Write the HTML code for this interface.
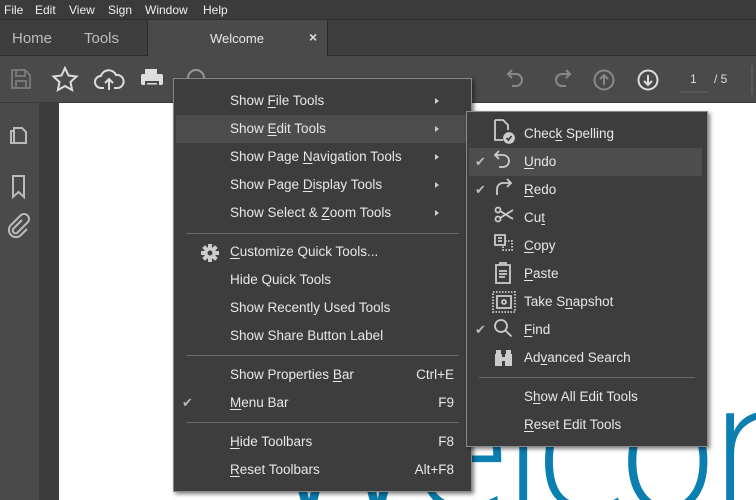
<!DOCTYPE html>
<html><head><meta charset="utf-8"><style>
*{margin:0;padding:0;box-sizing:border-box}
html,body{width:756px;height:500px;overflow:hidden}
body{background:#4a4a4a;font-family:"Liberation Sans",sans-serif;font-size:13px;color:#e8e8e8;position:relative}
.abs{position:absolute}
#mb{left:0;top:0;width:756px;height:20px;background:#3b3b3b;border-bottom:1px solid #2e2e2e}
#mb span{position:absolute;top:3px;font-size:12px;color:#f0f0f0}
#tabs{left:0;top:20px;width:756px;height:36px;background:#3e3e3e;border-bottom:1px solid #2e2e2e}
#tb{left:0;top:56px;width:756px;height:47px;background:#4a4a4a;border-bottom:1px solid #3a3a3a}
#side{left:0;top:103px;width:40px;height:397px;background:#4a4a4a;border-right:1px solid #3a3a3a}
#strip{left:40px;top:103px;width:19px;height:397px;background:#3c3c3c}
#page{left:59px;top:103px;width:697px;height:397px;background:#fff;overflow:hidden}
.menu{background:#3d3d3d;border:1px solid #8a8a8a;box-shadow:2px 2px 4px rgba(0,0,0,.5)}
.it{position:absolute;left:0;right:0;height:28px;line-height:28px}
.it .t{position:absolute;left:56px;font-size:13.5px;white-space:nowrap}
.it .k{position:absolute;right:17px;font-size:13.5px}
.it .ar{position:absolute;right:32px;top:11px;width:0;height:0;border-left:4px solid #ccc;border-top:3.5px solid transparent;border-bottom:3.5px solid transparent}
.it .ck{position:absolute;left:8px;top:0;color:#bbb;font-size:13px}
.hl{background:#4d4d4d;left:2px;right:5px}
.sep{position:absolute;left:12px;right:12px;height:1px;background:#6a6a6a}
u{text-decoration:underline;text-underline-offset:2px}
.ic{position:absolute;left:26px;top:5px}
</style></head><body>
<div id="mb" class="abs">
<span style="left:4px">File</span><span style="left:35px">Edit</span><span style="left:69px">View</span><span style="left:108px">Sign</span><span style="left:145px">Window</span><span style="left:203px">Help</span>
</div>
<div id="tabs" class="abs">
<div class="abs" style="left:0;top:0;width:148px;height:36px;border-right:1px solid #2a2a2a"></div>
<span class="abs" style="left:12px;top:10px;font-size:15px;color:#bdbdbd">Home</span>
<span class="abs" style="left:84px;top:10px;font-size:15px;color:#bdbdbd">Tools</span>
<div class="abs" style="left:148px;top:0;width:180px;height:36px;background:#4a4a4a;border-right:1px solid #2a2a2a"></div>
<span class="abs" style="left:210px;top:11px;font-size:13px;color:#e8e8e8">Welcome</span>
<span class="abs" style="left:309px;top:9px;font-size:14px;color:#ddd;font-weight:bold">×</span>
</div>
<div id="tb" class="abs">
<svg class="abs" style="left:0;top:0" width="756" height="47" fill="none" stroke-width="2">
<g stroke="#777"><path d="M12 14h13l5 5v13h-18z"/><path d="M16 14v6h9v-6M16 32v-7h10v7"/></g>
<path stroke="#ddd" d="M65 12l3.5 7.5 8 1-6 5.5 1.6 8-7.1-4-7.1 4 1.6-8-6-5.5 8-1z"/>
<path stroke="#ddd" d="M104 32h-3a6 6 0 0 1 0-12 8 8 0 0 1 15-1 6 6 0 0 1 2 13h-4M109 34v-10M105 27l4-4 4 4"/>
<g fill="#ddd" stroke="none"><rect x="145" y="13" width="12" height="5"/><rect x="141" y="18" width="22" height="11" rx="2"/><rect x="145" y="25" width="14" height="7" fill="#4a4a4a"/><rect x="147" y="27" width="10" height="1.5"/></g>
<circle cx="196" cy="22" r="8" stroke="#999"/>
<g stroke="#888"><path d="M508 18h8a6 6 0 0 1 0 12h-4M512 14l-4 4 4 4"/><path d="M570 18h-8a6 6 0 0 0 0 12h4M566 14l4 4-4 4"/><circle cx="604" cy="24" r="9.5"/><path d="M604 29v-10M600 23l4-4 4 4"/></g>
<g stroke="#ddd"><circle cx="648" cy="24" r="9.5"/><path d="M648 19v10M644 25l4 4 4-4"/></g>
<path stroke="#666" stroke-width="1" d="M680 36h28"/>
<path stroke="#666" stroke-width="1" d="M752 10v28"/>
</svg>
<span class="abs" style="left:690px;top:16px;font-size:12px;color:#ddd">1</span>
<span class="abs" style="left:714px;top:16px;font-size:12px;color:#ddd">/ 5</span>
</div>
<div id="side" class="abs">
<svg width="40" height="150" fill="none" stroke="#bbb" stroke-width="2">
<path d="M14 40h-3v-12h3M14 28v-3h8l4 4v11h-12z"/>
<path d="M13 73h11v21l-5.5-5-5.5 5z"/>
<path d="M22 117l-9 9a3 3 0 0 0 4 4l11-11a5 5 0 0 0-7-7l-10 10a7 7 0 0 0 10 10l6-6"/>
</svg>
</div>
<div id="strip" class="abs"></div>
<div id="page" class="abs">
<div class="abs" style="left:200px;top:259px;font-size:175px;line-height:1;color:#0a7fb0;white-space:nowrap;font-family:'DejaVu Sans',sans-serif;font-weight:200;letter-spacing:-15px">Welcome</div>
</div>

<div class="menu abs" style="left:173px;top:78px;width:299px;height:414px">
<div class="it" style="top:8px"><span class="t">Show <u>F</u>ile Tools</span><span class="ar"></span></div>
<div class="it hl" style="top:36px"><span class="t" style="left:54px">Show <u>E</u>dit Tools</span><span class="ar" style="right:27px"></span></div>
<div class="it" style="top:64px"><span class="t">Show Page <u>N</u>avigation Tools</span><span class="ar"></span></div>
<div class="it" style="top:92px"><span class="t">Show Page <u>D</u>isplay Tools</span><span class="ar"></span></div>
<div class="it" style="top:120px"><span class="t">Show Select &amp; <u>Z</u>oom Tools</span><span class="ar"></span></div>
<div class="sep" style="top:154px"></div>
<div class="it" style="top:159px"><svg class="ic" width="20" height="20" viewBox="0 0 20 20"><g fill="#ccc"><circle cx="10" cy="10" r="6"/><rect x="8" y="1" width="4" height="18"/><rect x="1" y="8" width="18" height="4"/><rect x="8" y="1" width="4" height="18" transform="rotate(45 10 10)"/><rect x="8" y="1" width="4" height="18" transform="rotate(-45 10 10)"/></g><circle cx="10" cy="10" r="2.5" fill="#3d3d3d"/></svg><span class="t"><u>C</u>ustomize Quick Tools...</span></div>
<div class="it" style="top:187px"><span class="t">Hide Quick Tools</span></div>
<div class="it" style="top:215px"><span class="t">Show Recently Used Tools</span></div>
<div class="it" style="top:243px"><span class="t">Show Share Button Label</span></div>
<div class="sep" style="top:276px"></div>
<div class="it" style="top:282px"><span class="t">Show Properties <u>B</u>ar</span><span class="k">Ctrl+E</span></div>
<div class="it" style="top:310px"><span class="ck">✔</span><span class="t"><u>M</u>enu Bar</span><span class="k">F9</span></div>
<div class="sep" style="top:343px"></div>
<div class="it" style="top:349px"><span class="t"><u>H</u>ide Toolbars</span><span class="k">F8</span></div>
<div class="it" style="top:377px"><span class="t"><u>R</u>eset Toolbars</span><span class="k">Alt+F8</span></div>
</div>

<div class="menu abs" style="left:466px;top:111px;width:242px;height:336px">
<div class="it" style="top:8px"><span class="t" style="left:57px">Chec<u>k</u> Spelling</span></div>
<div class="it hl" style="top:36px"><span class="ck" style="left:6px">✔</span><span class="t" style="left:55px"><u>U</u>ndo</span></div>
<div class="it" style="top:64px"><span class="ck">✔</span><span class="t" style="left:57px"><u>R</u>edo</span></div>
<div class="it" style="top:92px"><span class="t" style="left:57px">Cu<u>t</u></span></div>
<div class="it" style="top:120px"><span class="t" style="left:57px"><u>C</u>opy</span></div>
<div class="it" style="top:148px"><span class="t" style="left:57px"><u>P</u>aste</span></div>
<div class="it" style="top:176px"><span class="t" style="left:57px">Take S<u>n</u>apshot</span></div>
<div class="it" style="top:204px"><span class="ck">✔</span><span class="t" style="left:57px"><u>F</u>ind</span></div>
<div class="it" style="top:232px"><span class="t" style="left:57px">Ad<u>v</u>anced Search</span></div>
<div class="sep" style="top:265px"></div>
<div class="it" style="top:271px"><span class="t" style="left:57px">S<u>h</u>ow All Edit Tools</span></div>
<div class="it" style="top:299px"><span class="t" style="left:57px"><u>R</u>eset Edit Tools</span></div>
<svg class="abs" style="left:24px;top:6px" width="30" height="260" fill="none" stroke="#ccc" stroke-width="1.8">
<path d="M4 2h8l5 5v5M4 2v20h8"/><circle cx="18" cy="20" r="5" fill="#ccc"/><path d="M15.5 20l2 2 3-4" stroke="#3d3d3d"/>
<path d="M8 33l-4 4 4 4M4 37h8a6 6 0 0 1 0 12h-4"/>
<path d="M16 61l4 4-4 4M20 65h-8a6 6 0 0 0-6 6v6"/>
<circle cx="7" cy="92" r="2.5"/><circle cx="7" cy="101" r="2.5"/><path d="M9 93l13 8M9 100l13-8"/>
<path d="M4 117h10v10h-10zM7 120h4M7 123h4"/><path d="M14 123h7v9h-9v-5" stroke-dasharray="1.5 1.5"/>
<path d="M5 147h14v18h-14zM9 147v-2h6v2M8 153h8M8 156h8M8 159h6"/>
<path d="M2 174h22v20h-22z" stroke-dasharray="1.5 1.5"/><path d="M6 178h14v12h-14z"/><circle cx="13" cy="184" r="2"/>
<circle cx="10" cy="208" r="6"/><path d="M14.5 212.5l6 6"/>
<g fill="#ccc" stroke="none"><rect x="4" y="236" width="7" height="12"/><rect x="14" y="236" width="7" height="12"/><rect x="5" y="232" width="5" height="4"/><rect x="15" y="232" width="5" height="4"/><rect x="10" y="239" width="5" height="4"/></g>
</svg>
</div>
</body></html>
